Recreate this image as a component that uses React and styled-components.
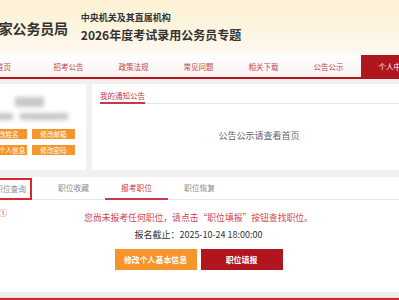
import React from "react";
import styled, { createGlobalStyle } from "styled-components";

const GlobalStyle = createGlobalStyle`
  html, body {
    margin: 0;
    padding: 0;
    background: #f1f1f1;
    overflow: hidden;
  }
  body {
    font-family: "Noto Sans CJK SC", "Noto Sans", sans-serif;
  }
`;

const Page = styled.div`
  width: 455px;
  margin-left: -29px;
`;

const Header = styled.header`
  height: 55px;
  display: flex;
  align-items: center;
  padding-left: 14px;
  background: linear-gradient(180deg, #fcf1d4 0%, #fdf5e2 60%, #fefaf2 100%);
`;

const SiteTitle = styled.h1`
  margin: 0;
  font-size: 14px;
  font-weight: 700;
  color: #333;
  letter-spacing: -0.2px;
  line-height: 1;
`;

const SubTitle = styled.div`
  margin-left: 13px;
  display: flex;
  flex-direction: column;
  gap: 5px;
  color: #333;
  font-weight: 700;
  margin-top: -1px;
`;

const SubLine = styled.div`
  font-size: ${p => p.size}px;
  line-height: 1.1;
`;

const Nav = styled.nav`
  display: flex;
  height: 22px;
  background: linear-gradient(180deg, #ffffff 0%, #f7f3f2 100%);
  border-bottom: 2px solid #b0151d;
`;

const NavItem = styled.div`
  width: 65px;
  display: flex;
  align-items: center;
  justify-content: center;
  font-size: 7.5px;
  color: ${p => (p.active ? "#fff" : "#c24548")};
  background: ${p => (p.active ? "#b0161e" : "transparent")};
`;

const Main = styled.main`
  padding-top: 5px;
  background: linear-gradient(180deg, #f7ecec 0px, #f1f1f1 5px);
`;

const TopRow = styled.div`
  display: flex;
  gap: 6px;
  height: 86px;
`;

const ProfileCard = styled.div`
  width: 115px;
  box-sizing: border-box;
  background: #fff;
  padding: 13px 11px 0 13px;
  display: flex;
  flex-direction: column;
  align-items: center;
`;

const Blur = styled.div`
  width: ${p => p.w}px;
  height: ${p => p.h}px;
  background: #b9b9b9;
  filter: blur(2px);
  opacity: 0.8;
`;

const BlurRow = styled.div`
  align-self: stretch;
  display: flex;
  gap: 7px;
  padding-left: 6px;
  margin-top: 6px;
`;

const ProfileButtons = styled.div`
  margin-top: 9px;
  display: grid;
  grid-template-columns: 43px 43px;
  column-gap: 5px;
  row-gap: 6px;
`;

const SmallButton = styled.div`
  height: 10px;
  background: #f6952b;
  color: #fff;
  font-size: 6.6px;
  line-height: 10px;
  text-align: center;
  white-space: nowrap;
  overflow: hidden;
`;

const NoticeCard = styled.div`
  flex: 1;
  background: #fff;
  padding: 7px 0 0 8px;
  display: flex;
  flex-direction: column;
`;

const NoticeHead = styled.div`
  display: flex;
  border-bottom: 1px solid #e6e6e6;
`;

const NoticeTitle = styled.div`
  font-size: 7.5px;
  line-height: 10px;
  color: #c8384a;
  padding-bottom: 1px;
  border-bottom: 2px solid #c8384a;
  margin-bottom: -1px;
`;

const NoticeBody = styled.div`
  flex: 1;
  display: flex;
  align-items: center;
  justify-content: center;
  font-size: 9px;
  color: #666;
  padding-right: 8px;
  padding-bottom: 4px;
`;

const Panel = styled.section`
  position: relative;
  margin-top: 7px;
  background: #fff;
  padding-bottom: 22px;
`;

const Tabs = styled.div`
  display: flex;
  height: 22px;
  padding-left: 8px;
  border-bottom: 1px solid #e6e6e6;
`;

const Tab = styled.div`
  width: 63px;
  box-sizing: border-box;
  display: flex;
  align-items: center;
  justify-content: center;
  font-size: 7.8px;
  color: ${p => (p.active ? "#c8384a" : "#8a8a8a")};
  border-bottom: 2px solid ${p => (p.active ? "#c8384a" : "transparent")};
  margin-bottom: -1px;
`;

const Marked = styled.span`
  width: 42px;
  height: 22px;
  box-sizing: border-box;
  border: 2px solid #e0262d;
  display: flex;
  align-items: center;
  justify-content: center;
  margin-top: 2px;
`;

const StepMark = styled.span`
  position: absolute;
  left: 28px;
  top: 30px;
  font-size: 8px;
  color: #d0434f;
`;

const Message = styled.p`
  margin: 12px 0 0;
  text-align: center;
  font-size: 8.8px;
  line-height: 12px;
  color: #d0434f;
`;

const Deadline = styled.p`
  margin: 5px 0 0;
  text-align: center;
  font-size: 9px;
  line-height: 12px;
  color: #333;
`;

const Actions = styled.div`
  margin-top: 8px;
  display: flex;
  justify-content: center;
  gap: 4px;
`;

const ActionButton = styled.div`
  width: 82px;
  height: 21px;
  display: flex;
  align-items: center;
  justify-content: center;
  background: ${p => (p.variant === "primary" ? "#b1151d" : "#f6952b")};
  color: #fff;
  font-size: 7.9px;
  font-weight: 700;
`;

const Gap = styled.div`
  height: 5px;
  background: #efefef;
  border-bottom: 1px solid #f6dede;
`;

const Footer = styled.footer`
  height: 30px;
  border-top: 2px solid #d42a2f;
  background: #6e1d1f;
`;

const navItems = ["首页", "招考公告", "政策法规", "常见问题", "相关下载", "公告公示", "个人中心"];
const tabs = ["职位查询", "职位收藏", "报考职位", "职位恢复"];

export default function App() {
  return (
    <>
      <GlobalStyle />
      <Page>
        <Header>
          <SiteTitle>国家公务员局</SiteTitle>
          <SubTitle>
            <SubLine size={9}>中央机关及其直属机构</SubLine>
            <SubLine size={12}>2026年度考试录用公务员专题</SubLine>
          </SubTitle>
        </Header>
        <Nav>
          {navItems.map(item => (
            <NavItem key={item} active={item === "个人中心"}>
              {item}
            </NavItem>
          ))}
        </Nav>
        <Main>
          <TopRow>
            <ProfileCard>
              <Blur w={29} h={10} />
              <BlurRow>
                <Blur w={23} h={7} />
                <Blur w={48} h={7} />
              </BlurRow>
              <ProfileButtons>
                <SmallButton>修改姓名</SmallButton>
                <SmallButton>修改邮箱</SmallButton>
                <SmallButton>完善个人信息</SmallButton>
                <SmallButton>修改密码</SmallButton>
              </ProfileButtons>
            </ProfileCard>
            <NoticeCard>
              <NoticeHead>
                <NoticeTitle>我的通知公告</NoticeTitle>
              </NoticeHead>
              <NoticeBody>公告公示请查看首页</NoticeBody>
            </NoticeCard>
          </TopRow>
          <Panel>
            <Tabs>
              {tabs.map((t, i) => (
                <Tab key={t} active={t === "报考职位"}>
                  {i === 0 ? <Marked>{t}</Marked> : t}
                </Tab>
              ))}
            </Tabs>
            <StepMark>①</StepMark>
            <Message>您尚未报考任何职位，请点击“职位填报”按钮查找职位。</Message>
            <Deadline>报名截止：2025-10-24 18:00:00</Deadline>
            <Actions>
              <ActionButton>修改个人基本信息</ActionButton>
              <ActionButton variant="primary">职位填报</ActionButton>
            </Actions>
          </Panel>
          <Gap />
          <Footer />
        </Main>
      </Page>
    </>
  );
}
